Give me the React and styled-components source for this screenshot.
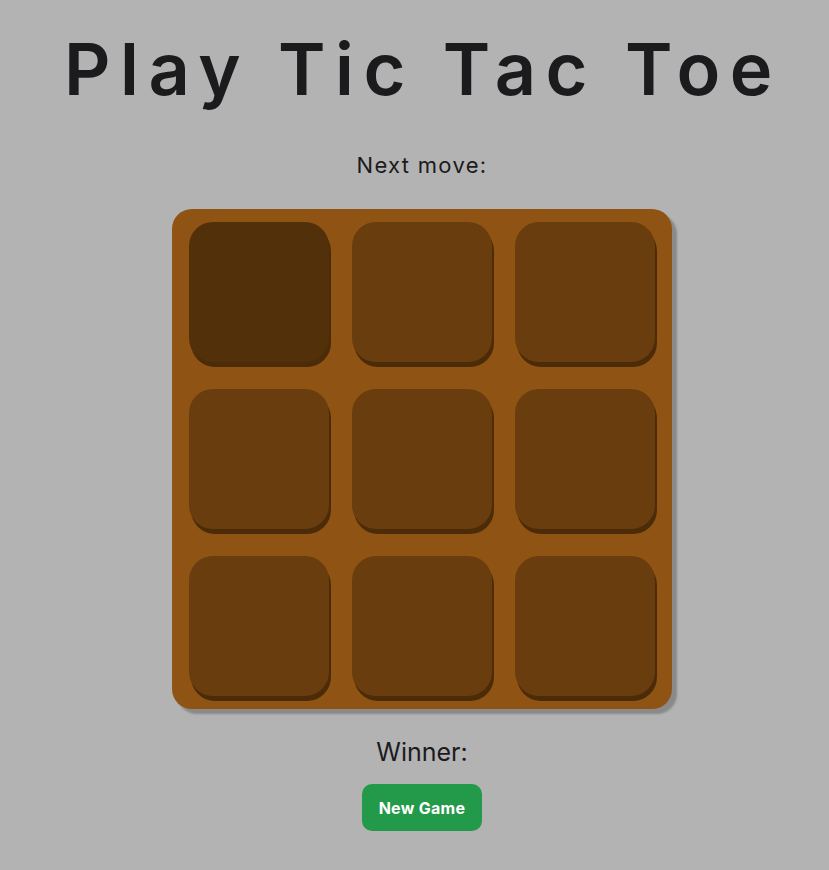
import React, { useState } from "react";
import styled, { createGlobalStyle } from "styled-components";

const GlobalStyle = createGlobalStyle`
  html, body {
    margin: 0;
    padding: 0;
    background: #b3b3b3;
  }
  body {
    font-family: "Inter", "Noto Sans", sans-serif;
    color: #1b1b1d;
  }
`;

const Page = styled.main`
  min-height: 870px;
  box-sizing: border-box;
  padding: 33px 0 0 15px;
  display: flex;
  flex-direction: column;
  align-items: center;
`;

const Title = styled.h1`
  margin: 0;
  font-size: 72px;
  line-height: 72px;
  font-weight: 600;
  letter-spacing: 9.6px;
  padding-left: 2px;
  color: #1b1b1d;
`;

const Status = styled.p`
  margin: ${(p) => p.$top}px 0 0;
  font-size: ${(p) => p.$size}px;
  line-height: ${(p) => p.$line}px;
  letter-spacing: ${(p) => p.$spacing || 0}px;
  font-weight: 400;
`;

const Board = styled.div`
  margin-top: 31px;
  width: 500px;
  height: 500px;
  box-sizing: border-box;
  padding: 13px 16px 12px 17px;
  background: #8f5413;
  border-radius: 20px;
  box-shadow: 5px 5px 2px #8a8a8a;
  display: grid;
  grid-template-columns: repeat(3, 140px);
  grid-template-rows: repeat(3, 140px);
  column-gap: 23px;
  row-gap: 27px;
`;

const Cell = styled.button`
  border: none;
  padding: 0;
  border-radius: 24px;
  background: ${(p) => (p.$active ? "#52300a" : "#6a3d0e")};
  box-shadow: 2px 5px 0 #4c2b09;
  cursor: pointer;
  font-family: inherit;
  font-size: 80px;
  font-weight: 700;
  color: #f3e6d0;
`;

const NewGame = styled.button`
  margin-top: 17px;
  width: 120px;
  height: 47px;
  border: none;
  border-radius: 10px;
  background: #229a49;
  color: #ffffff;
  font-family: "Inter", "Noto Sans", sans-serif;
  font-size: 16px;
  letter-spacing: 0.3px;
  font-weight: 700;
  cursor: pointer;
`;

export default function App() {
  const [cells, setCells] = useState(Array(9).fill(null));
  const [active, setActive] = useState(0);

  return (
    <>
      <GlobalStyle />
      <Page>
        <Title>Play Tic Tac Toe</Title>
        <Status $top={47} $size={22} $line={26} $spacing={1.3}>
          Next move:
        </Status>
        <Board>
          {cells.map((c, i) => (
            <Cell key={i} $active={i === active} onMouseEnter={() => setActive(i)}>
              {c}
            </Cell>
          ))}
        </Board>
        <Status $top={28} $size={25} $line={30}>
          Winner:
        </Status>
        <NewGame onClick={() => setCells(Array(9).fill(null))}>New Game</NewGame>
      </Page>
    </>
  );
}
